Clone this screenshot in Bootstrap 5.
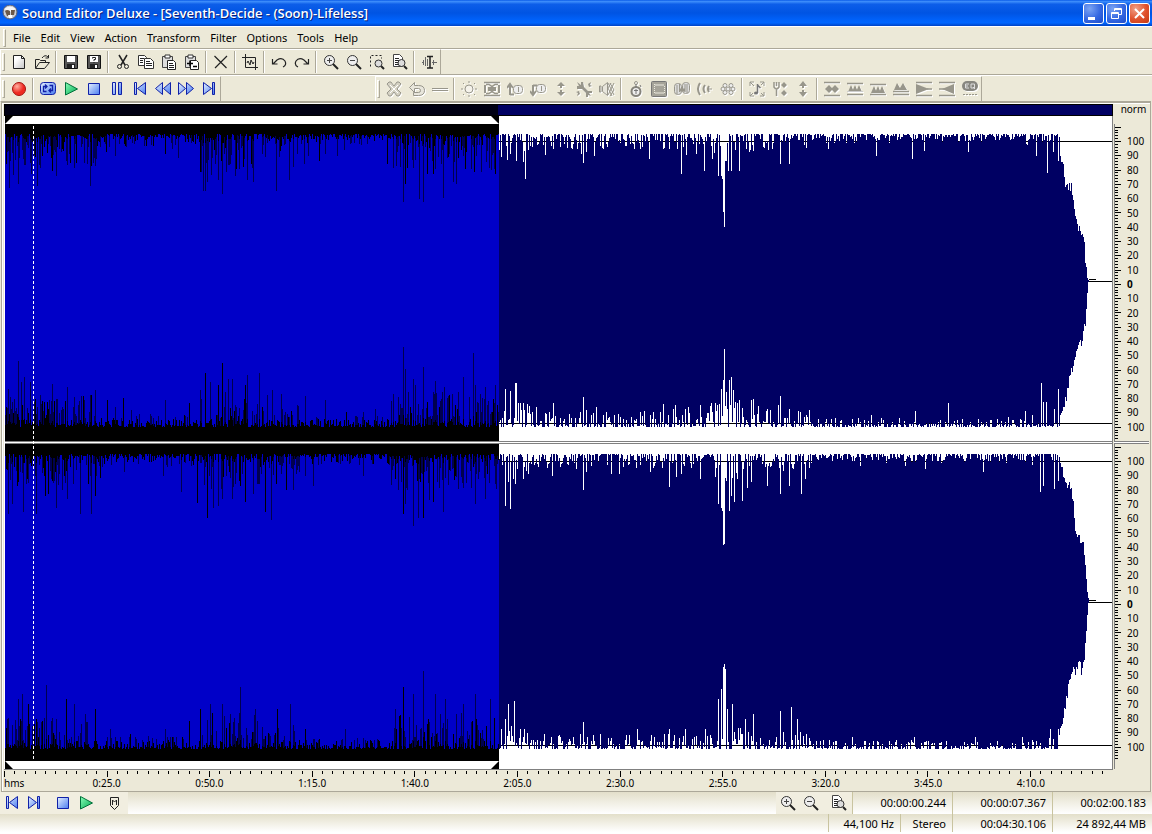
<!DOCTYPE html>
<html lang="en">
<head>
<meta charset="utf-8">
<meta name="viewport" content="width=device-width, initial-scale=1">
<title>Sound Editor Deluxe</title>
<link href="https://cdn.jsdelivr.net/npm/bootstrap@5.3.0/dist/css/bootstrap.min.css" rel="stylesheet">
<style>
:root{--face:#ece9d8;--edge:#aca899}
body{font:11px/14px "Noto Sans","Open Sans",sans-serif;color:#000;background:var(--face)}
button{border:0;background:none;padding:0;color:inherit;font:inherit}
svg{display:block}
.titlebar{height:26px;padding:0 2px;background:linear-gradient(#0a5be8 0,#3d8dfb 6%,#0d5ee9 16%,#0054e3 50%,#0062fb 78%,#0066ff 88%,#0042c4 100%)}
.titlebar h1{font:600 13px/20px "Open Sans","Noto Sans",sans-serif;color:#fff;text-shadow:1px 1px 0 #0a1f7a}
.winbtns{gap:2px}
.winbtn{width:21px;height:21px;border:1px solid #fff;border-radius:3px;background:radial-gradient(circle at 30% 25%,#7ba4f3,#3568e2 55%,#1d4bc9)}
.winbtn.quit{background:radial-gradient(circle at 30% 25%,#f0a088,#e0512c 55%,#c43a14)}
.menubar{height:23px;border-top:1px solid #fff;border-bottom:1px solid var(--edge);padding-left:3px}
.grip{width:3px;height:18px;border:1px solid;border-color:#fff var(--edge) var(--edge) #fff;margin-right:2px}
.menubar button{padding:0 5px}
.strip{height:26px;border-top:1px solid #fff;border-bottom:1px solid var(--edge)}
.band{height:26px;padding-left:1px;border:1px solid;border-color:#fff var(--edge) var(--edge) #fff}
.tool{width:23px;height:22px;display:grid;place-items:center}
.rule{width:2px;height:22px;margin:0 2px;border-left:1px solid var(--edge);border-right:1px solid #fff}
.fx .tool{color:#98968b;filter:drop-shadow(1px 1px 0 #fff)}
.fxgap{width:154px}
.editor{border:1px solid var(--edge);border-top-width:2px;margin:0 1px;padding:1px 1px 0 2px;box-shadow:inset 1px 1px 0 #fff}
.view{min-width:0}
.overview{height:12px;border:1px solid #000;background:linear-gradient(90deg,#000014 44.5%,#000063 44.5%)}
.marks{height:8px;background:#fff}
.marks div{width:44.6%}
.stage{border-right:1px solid #808080;padding-left:1px;background:#fff}
.wave{flex:1 0 317px;min-height:0}
.wave svg,.ticks{width:100%;height:100%}
.split{height:3px;border:1px solid #808080;border-width:1px 0;background:#fff}
.scale{width:35px;margin-left:1px}
.scale .ticks{width:7px}
.inner{border-left:1px solid #808080}
.nums{font-size:10px;line-height:12px;padding:10px 0 7px 5px}
.nums span{flex:1;display:flex;align-items:center}
.scaletop{height:20px;font-size:10px;line-height:10px;padding-left:4px}
.ruler{height:22px;font-size:10px;border-top:1px solid #808080}
.ruler svg{width:100%;height:7px}
.ruler span{flex:2 1 0;text-align:center;line-height:13px}
.cursor{left:29px;top:0;bottom:0;border-left:1px dashed #fff;z-index:2}
.stat{height:22px;line-height:22px;background:linear-gradient(#e3dfca,#fff)}
.stat.low{height:18px;line-height:20px}
.stat .flat{background:#f1eee0}
.cell{border-left:1px solid #c9c4a0;text-align:right;padding-right:6px}
.c1{width:100px}.c2{width:52px}.c3{width:72px}
.foot{height:2px}
#markTools{padding-right:3px}
#markTools .tool:nth-child(-n+2){margin-right:-1px}
#markTools .tool:nth-child(3){margin-left:7px}
#markTools .tool:nth-child(5){margin-left:5px}
#zoomTools{padding-right:2px}
#zoomTools .tool:nth-child(3){margin-left:5px}
</style>
</head>
<body>
<svg width="0" height="0" class="position-absolute" aria-hidden="true">
<defs>
<linearGradient id="gb" x1="0" y1="0" x2="1" y2="1"><stop offset="0" stop-color="#e6f0ff"/><stop offset="1" stop-color="#4a7df0"/></linearGradient>
<linearGradient id="gg" x1="0" y1="0" x2="1" y2="1"><stop offset="0" stop-color="#8affb8"/><stop offset="1" stop-color="#00a850"/></linearGradient>
<radialGradient id="gr" cx=".35" cy=".3"><stop offset="0" stop-color="#ffb0a0"/><stop offset="1" stop-color="#ee2a22"/></radialGradient>
<linearGradient id="gp" x1="0" y1="0" x2="1" y2="1"><stop offset=".3" stop-color="#fff"/><stop offset="1" stop-color="#c4c4c4"/></linearGradient>
</defs></svg>

<div class="d-flex flex-column min-vh-100">
<header class="titlebar d-flex align-items-center">
  <svg width="16" height="16" viewBox="0 0 16 16"><circle cx="8" cy="7" r="7" fill="#c9cdd6" stroke="#5a5f70"/><path d="M2 4q6-5 12 0l-6 3z" fill="#f5f6f8"/><path d="M3 6q2-2 5 0v5H5zM9 5h4l-1 5H9z" fill="#6b5848"/><path d="M6 10h4v3H7z" fill="#fff"/></svg>
  <h1 class="mb-0 ms-1 me-auto">Sound Editor Deluxe - [Seventh-Decide - (Soon)-Lifeless]</h1>
  <div class="winbtns d-flex">
    <button class="winbtn" aria-label="Minimize"><svg width="19" height="19"><path d="M4 13h7v3H4z" fill="#fff"/></svg></button>
    <button class="winbtn" aria-label="Restore"><svg width="19" height="19" fill="none" stroke="#fff"><path d="M7.5 7V4.500h7v6h-3M7 5.500h8M4.500 8.500h7v6h-7zM4 9.500h7"/></svg></button>
    <button class="winbtn quit" aria-label="Close"><svg width="19" height="19" stroke="#fff" stroke-width="2"><path d="M5 5l9 9M14 5l-9 9"/></svg></button>
  </div>
</header>

<nav class="menubar d-flex align-items-center" aria-label="Menu">
  <div class="grip"></div>
  <button>File</button><button>Edit</button><button>View</button><button>Action</button><button>Transform</button><button>Filter</button><button>Options</button><button>Tools</button><button>Help</button>
</nav>
<div class="strip d-flex align-items-center"><div class="band d-flex align-items-center" id="mainTools"></div></div>
<div class="strip d-flex align-items-center border-bottom-0"><div class="band d-flex align-items-center" id="playTools"></div><div class="fxgap"></div><div class="band fx d-flex align-items-center" id="fxTools"></div></div>

<main class="editor d-flex flex-column flex-grow-1">
  <div class="d-flex flex-grow-1">
    <section class="view flex-grow-1 d-flex flex-column">
      <div class="overview"></div>
      <div class="stage d-flex flex-column flex-grow-1 position-relative">
        <div class="marks"><div class="d-flex justify-content-between"><svg width="8" height="8"><path d="M0 0h8L0 8z"/></svg><svg width="8" height="8"><path d="M0 0h8v8z"/></svg></div></div>
        <div class="wave" id="left"></div>
        <div class="split"></div>
        <div class="wave" id="right"></div>
        <div class="marks"><div class="d-flex justify-content-between"><svg width="8" height="8"><path d="M0 0v8h8z"/></svg><svg width="8" height="8"><path d="M8 0v8H0z"/></svg></div></div>
        <div class="cursor position-absolute"></div>
      </div>
    </section>
    <aside class="scale d-flex flex-column">
      <div class="scaletop text-center">norm</div>
      <div class="wave d-flex inner" id="scaleL"></div>
      <div class="split"></div>
      <div class="wave d-flex inner" id="scaleR"></div>
      <div class="marks inner bg-transparent"></div>
    </aside>
  </div>
  <div class="d-flex"><div class="ruler flex-grow-1"><svg id="timeTicks" viewBox="0 0 1109 7" preserveAspectRatio="none" shape-rendering="crispEdges"></svg><div class="d-flex" id="times"></div></div><div class="scale"></div></div>
</main>

<footer>
  <div class="stat d-flex align-items-center">
    <div class="flat d-flex" id="markTools"></div>
    <div class="flex-grow-1"></div>
    <div class="flat d-flex" id="zoomTools"></div>
    <div class="cell c1">00:00:00.244</div><div class="cell c1">00:00:07.367</div><div class="cell c1">00:02:00.183</div>
  </div>
  <div class="stat low d-flex">
    <div class="flex-grow-1"></div>
    <div class="cell c3">44,100 Hz</div><div class="cell c2">Stereo</div><div class="cell c1">00:04:30.106</div><div class="cell c1">24 892,44 MB</div>
  </div>
  <div class="foot bg-white"></div>
</footer>
</div>
<script>
/* Icons, each on a 16 by 16 grid */
const k='fill="none" stroke="#222"', b='fill="url(#gb)" stroke="#1020a8"', g='fill="none" stroke="currentColor"', f='fill="currentColor"';
const lens=`<path d="M10 10l5 5" stroke="#222" stroke-width="2"/><circle cx="6.5" cy="6.5" r="5" fill="#eee" stroke="#333"/>`;
const clip=`<path d="M1.5 2.5h10v11h-10z" fill="#ddd" stroke="#444"/><path d="M4 1h5v3H4z" fill="#fff" stroke="#333"/><path d="M6.5 6.5h6l2 2v7h-8z" fill="#fff" stroke="#222"/>`;
const disk=`<path d="M1.5 1.5h13v13h-13z" fill="#555" stroke="#111"/><path d="M4 2h8v6H4z" fill="#fff"/><path d="M4 10h8v4H4z" fill="#222"/><path d="M9 11h2v3H9z" fill="#fff"/>`;
const page=`<path d="M1.5 .5h6l3 3v9h-9z" fill="#fff" stroke="#444"/><path d="M3 4.5h4M3 6.5h6M3 8.5h6M3 10.5h4" ${k}/>`;
const icons={
'New':`<path d="M2.5 1.5h8l3 3v10h-11z" fill="url(#gp)" stroke="#222"/><path d="M10.5 1.5v3h3" ${k}/>`,
'Open':`<path d="M1.5 14V5.5h4l1 1h5V8M1.5 14.5l4-6h10l-5 6z" ${k}/><path d="M8 4q3-4 6-1M14.5 1v3h-3" ${k}/>`,
'Save':disk,
'Save as':disk+`<path d="M6.5 4.5v-1h3v2h-1.500v1.500M8 8v1" ${k}/>`,
'Cut':`<path d="M4 1l6 10M12 1L6 11" stroke="#222" stroke-width="1.5"/><circle cx="4.5" cy="12.5" r="2" ${k}/><circle cx="11.5" cy="12.5" r="2" ${k}/>`,
'Copy':`<path d="M.5 1.500h6l2 2v8h-8z" fill="#fff" stroke="#333"/><path d="M2 4.5h4M2 6.5h3M2 8.5h3" ${k}/><path d="M6.5 4.5h6l3 3v7h-9z" fill="#fff" stroke="#333"/><path d="M8 7.5h4M8 9.5h6M8 11.5h6" ${k}/>`,
'Paste':clip+`<path d="M8 9.5h4M8 11.5h5M8 13.5h5" ${k}/>`,
'Paste new':clip+`<path d="M3 9.5h6M6 6.5v6M9 12.5h4" stroke="#000" stroke-width="1.5"/>`,
'Delete':`<path d="M1.5 2l12 12M14 2L2 14" ${k} stroke-width="1.2"/>`,
'Trim':`<path d="M3.5 0v13.5H16M0 3.5h13.5V16M5 9l1-2 2 4 1-5 2 4 1-2" ${k}/>`,
'Undo':`<path d="M1.5 5v5h5M2 10l4-4q5-3 8 1 2 4-2 6" ${k} stroke-width="1.2"/>`,
'Redo':`<path d="M14.500 5v5h-5M14 10l-4-4Q5 3 2 7q-2 4 2 6" ${k} stroke-width="1.2"/>`,
'Zoom in':lens+`<path d="M4 6.5h5M6.5 4v5" stroke="#444"/>`,
'Zoom out':lens+`<path d="M4 6.5h5" stroke="#444"/>`,
'Zoom selection':`<path d="M1.5 12.5v-11h11v3" ${k} stroke-dasharray="2 2"/><path d="M12 12l3 3" stroke="#222" stroke-width="2"/><circle cx="9.5" cy="9.5" r="3.5" fill="#ddd" stroke="#333"/>`,
'Zoom all':page+`<path d="M12 12l3 3" stroke="#222" stroke-width="2"/><circle cx="9.5" cy="9" r="3.5" fill="#ddd" stroke="#333"/>`,
'Edit cursor':`<path d="M1 8.5h1.500M2.5 6v5M4.500 3v9M6.500 5v7M11 8.5h5M12.5 6v5" fill="none" stroke="#666"/><path d="M6 2.5h6M9 2v12M6 14h6" stroke="#222" stroke-width="1.5"/>`,
'Record':`<circle cx="8" cy="8" r="6.5" fill="url(#gr)" stroke="#a51410"/>`,
'Loop':`<rect x=".5" y="1.5" width="15" height="12" rx="3" ${b}/><path d="M6.500 5.5H3.500v5h3M9.500 4.500h3v5h-3M5 3.5l2 2-2 2M11 7.500l-2 2 2 2" fill="none" stroke="#1020a8" stroke-width="1.3"/>`,
'Play':`<path d="M2.5 1.5l12 6.500-12 6z" fill="url(#gg)" stroke="#00703a"/>`,
'Stop':`<path d="M2.5 2.5h11v11h-11z" ${b}/>`,
'Pause':`<path d="M3.5 1.5h3v12h-3zM9.5 1.5h3v12h-3z" ${b}/>`,
'Start':`<path d="M2.5 1.5h2v12h-2zM13.5 1.5v12l-8-6z" ${b}/>`,
'Rewind':`<path d="M7.5 1.5v12l-7-6zM15.5 1.5v12l-7-6z" ${b}/>`,
'Forward':`<path d="M.5 1.5v12l7-6zM8.5 1.5v12l7-6z" ${b}/>`,
'End':`<path d="M11.5 1.5h2v12h-2zM2.5 1.5v12l8-6z" ${b}/>`,
'Marker':`<path d="M4.5 2.5h8v8l-4 4-4-4zM6.5 10V5l2 2 2-2v5" ${k}/>`,
'Mute':`<path d="M1 3l2-2h2l3 4 3-4h2l2 2-4 5 4 4-2 3h-2l-3-4-3 4H3l-2-3 4-4z" fill="#d5d2c4" stroke="currentColor"/><path d="M4 4l8 8M12 4l-8 8" stroke="#fff"/>`,
'Reverse':`<path d="M.5 6.5l5-5v3h4q6 0 6 5t-6 5h-5v-3h5q2 0 2-2t-2-2h-4v4z" fill="#e8e6dc" stroke="currentColor"/>`,
'Silence':`<path d="M0 7.5h16M0 9.5h16" ${g}/>`,
'Amplify':`<circle cx="8" cy="8" r="4" fill="#f4f2ea" stroke="currentColor"/><path d="M8 0v2M8 14v2M0 8h2M14 8h2M2 2l1 1M14 2l-1 1M2 14l1-1M14 14l-1-1" ${g}/>`,
'Compress':`<path d="M0 1.5h16M0 14.5h16M2 3.5h3l3 2 3-2h3M2 12.5h3l3-2 3 2h3" ${g} stroke-width="1.500"/><path d="M4 6h8v4H4zM0 4h2v8H0zM14 4h2v8h-2z" ${f}/>`,
'Fade in':`<path d="M3 14V4M0 7l3-4 3 4M3 13.5h4" ${g} stroke-width="2"/><rect x="6.500" y="4.5" width="9" height="8" rx="3" fill="#eee" stroke="currentColor"/><path d="M11.5 6v5" ${g}/>`,
'Fade out':`<path d="M3 4v9M0 10l3 4 3-4M3 4.500h4" ${g} stroke-width="2"/><rect x="6.500" y="3.5" width="9" height="8" rx="3" fill="#eee" stroke="currentColor"/><path d="M11.5 5v5" ${g}/>`,
'Vertical':`<path d="M8 1l4 4H9v2H7V5H4zM8 15l4-4H9V9H7v2H4z" ${f}/>`,
'Stretch':`<path d="M1 1l4 3V1h2l1 5 4 4h4v2h-3l2 3-3-1v2h-2v-4l-4-4H1V5h2zM15 1l-1 3 2 1-3 1-1-3zM1 15l1-3-2-1 3-1 1 3z" ${f}/>`,
'Volume':`<path d="M.500 5v6h1.500V5zM3.5 5.500l5-4v13l-5-4z" fill="#e8e6dc" stroke="currentColor"/><path d="M9 2l6 12M9 7l4 8M11 2l4 7M15 2L9 14M11 15l4-6M9 7l3-5" ${g}/>`,
'Tempo':`<circle cx="8" cy="10.5" r="4.5" fill="#eee" stroke="#85837b" stroke-width="2"/><circle cx="8" cy="2" r="1.5" ${g}/><path d="M8 3v3M8 8v5M6 9.500h4M12 4l1 2" stroke="#777" fill="none"/>`,
'Chamber':`<rect x=".5" y=".5" width="15" height="15" rx="1" fill="#a5a399" stroke="#777"/><path d="M4 4h9M4 12h9" fill="none" stroke="#eceadf"/><path d="M3.500 3v10M13.500 5v7" stroke="#eceadf" stroke-dasharray="1 1"/>`,
'Chorus':`<rect x=".5" y="2.5" width="7" height="11" rx="3" fill="#ddd" stroke="currentColor"/><rect x="8.5" y="1.5" width="7" height="11" rx="3" fill="#ddd" stroke="currentColor"/><path d="M3 4v9M5.500 3v8M11 3v8M13 3v9" ${g}/><path d="M5 9h6" ${g} stroke-width="3"/>`,
'Echo':`<path d="M3 2q-4 6 0 12M8 4q-3 4 0 8M12 5q-2 3 0 6" ${g} stroke-width="2"/><path d="M12 8h3" ${g}/>`,
'Flanger':`<g fill="#eee" stroke="currentColor"><circle cx="5" cy="4.500" r="2"/><circle cx="11" cy="4.500" r="2"/><circle cx="3" cy="8" r="2"/><circle cx="8" cy="8" r="2"/><circle cx="13" cy="8" r="2"/><circle cx="5" cy="11.500" r="2"/><circle cx="11" cy="11.500" r="2"/></g>`,
'Pitch':`<path d="M1 5V1h4M11 1h4v4M1 11v4h4M11 15h4v-4M1 1l4 4M15 1l-3 3M1 15l3-3M15 15l-3-3" ${g}/><path d="M8.500 3v9M8.500 4l3 3" fill="none" stroke="#777" stroke-width="1.5"/><ellipse cx="7" cy="12" rx="2" ry="1.5" fill="#777"/>`,
'Tune':`<path d="M2 1v5q2.500 4 5 0V1M4.500 8v7M4.500 1v4" ${g} stroke-width="1.5"/><path d="M12 1l3 3-3 3-3-3zM12 15l3-3-3-3-3 3z" ${f}/>`,
'Height':`<path d="M8 0l4 5H9v2H7V5H4zM8 16l4-5H9V9H7v2H4z" ${f}/>`,
'Notch':`<path d="M0 1.5h16M0 14.500h16" ${g} stroke-width="1.500"/><path d="M1 8l4-4 3 3 3-3 4 4-4 4-3-3-3 3z" ${f}/>`,
'Band pass':`<path d="M0 2.5h16M0 13.5h16" ${g} stroke-width="1.500"/><path d="M1 11l3-7 3 7zM5 11l3-7 3 7zM9 11l3-7 3 7z" ${f}/><path d="M0 10.500h16" stroke="#ccc"/>`,
'High pass':`<path d="M0 3.5h16M0 13.5h16" ${g} stroke-width="1.500"/><path d="M1 12l3-7 3 7zM5 12l3-7 3 7zM9 12l3-7 3 7z" ${f}/>`,
'Low pass':`<path d="M0 10.5h16M0 13.5h16" ${g} stroke-width="1.5"/><path d="M1 9l3-7 3 5 3-5 4 7z" ${f}/>`,
'High shelf':`<path d="M0 1.5h16M0 14.5h16M11 8h5" ${g} stroke-width="1.5"/><path d="M0 3l13 5-13 5z" ${f}/>`,
'Low shelf':`<path d="M0 1.5h16M0 14.5h16M0 8h5" ${g} stroke-width="1.5"/><path d="M15 3L3 8l12 5z" ${f}/>`,
'Equalizer':`<rect y="0" width="16" height="10" rx="5" fill="#888780"/><path d="M7 3H3.500v4H7M3.500 5H6M9 3h3.500v4H9zM11 6l2 2" fill="none" stroke="#ddd"/><path d="M1 13.5h14" ${g} stroke-dasharray="2 1"/>`
};
const button=n=>`<button class="tool" aria-label="${n}"><svg width="16" height="16" viewBox="0 0 16 16">${icons[n]}</svg></button>`;
function fill(id,list,grip){
  document.getElementById(id).innerHTML=(grip?'<div class="grip"></div>':'')+list.split('|').map(s=>s.split(',').map(button).join('')).join('<div class="rule"></div>');
}
fill('mainTools','New,Open|Save,Save as|Cut,Copy,Paste,Paste new|Delete|Trim|Undo,Redo|Zoom in,Zoom out,Zoom selection,Zoom all|Edit cursor',1);
fill('playTools','Record|Loop,Play,Stop,Pause,Start,Rewind,Forward,End',1);
fill('fxTools','Mute,Reverse,Silence|Amplify,Compress,Fade in,Fade out,Vertical,Stretch,Volume|Tempo,Chamber,Chorus,Echo,Flanger|Pitch,Tune,Height|Notch,Band pass,High pass,Low pass,High shelf,Low shelf,Equalizer',1);
fill('markTools','Start,End,Stop,Play,Marker');
fill('zoomTools','Zoom in,Zoom out,Zoom all');

/* Audio peaks: position:distance below full level, for each edge of each channel */
const parse=s=>s.split(',').map(p=>p.split(':').map(Number));
const edges={
lt:['9:54,13:41,18:50,24:31,31:40,37:52,40:34,44:13,51:24,52:37,56:42,61:18,74:34,84:29,87:30,90:52,95:32,106:18,115:22,125:12,165:20,172:15,178:24,200:38,201:38,203:57,205:57,207:48,211:41,215:30,218:46,222:60,226:38,230:30,235:42,243:33,247:46,253:48,262:20,265:23,276:57,289:46,293:33,304:30,308:22,319:27,325:20,337:22,344:16,359:10,387:30,393:34,400:33,403:68,405:50,413:34,419:65,423:68,427:40,433:40,443:64,449:20,453:48,456:50,463:22,474:38,481:38,486:28,495:40,507:26,510:20,516:27,523:28,525:45,528:16,538:10,545:21,553:15,581:20,583:29,586:18,594:22,606:10,620:9,625:12,649:25,663:15,669:15,677:15,681:40,686:21,696:20,704:37,712:25,718:42,721:42,722:45,723:78,724:93,725:27,726:27,728:37,731:37,735:16,739:37,746:15,753:17,768:16,780:30,789:30,806:14,828:15,876:22,912:25,924:17,968:18,1036:22,1047:39,1053:18,1058:27','1060:20,1063:30,1065:50,1068:53,1071:52,1073:65,1075:80,1078:92,1081:97,1084:105,1085:125,1087:140,1088:146'],
lb:['6:20,8:38,10:30,12:25,18:66,21:45,24:50,30:45,37:20,40:32,44:25,52:43,57:28,62:20,67:40,74:30,84:27,90:32,95:37,107:27,115:20,123:29,131:17,165:27,189:24,200:37,205:54,210:45,218:42,222:64,228:48,232:48,236:20,245:42,247:52,259:54,262:20,267:32,272:37,281:33,285:15,305:31,325:27,346:15,363:15,375:18,393:33,398:30,403:80,405:58,413:48,415:42,423:60,427:25,433:35,435:46,444:40,455:22,463:50,473:74,475:42,480:33,485:40,495:42,497:22,505:38,510:36,515:44,516:44,518:24,523:24,527:23,532:15,536:20,553:24,583:30,586:17,591:12,596:20,603:12,640:15,644:16,663:23,673:18,675:22,685:18,688:20,700:22,708:14,717:22,721:38,723:47,724:78,726:35,729:47,731:50,733:37,735:25,739:27,751:27,753:28,758:21,778:22,780:31,789:18,798:16,806:12,871:12,915:16,948:24,1008:10,1025:16,1041:44,1043:25,1046:25,1054:18,1058:38','1060:10,1063:15,1066:30,1068:44,1070:50,1074:66,1076:72,1079:84,1082:84,1085:105,1087:130,1088:145'],
rt:['8:60,12:50,18:28,23:58,26:30,36:60,45:42,48:40,56:54,62:36,67:45,73:30,80:60,91:60,95:42,100:24,124:18,163:22,181:38,197:49,207:64,213:54,218:52,222:45,232:45,245:48,253:40,265:58,271:66,276:30,286:36,293:36,305:22,313:32,363:22,395:25,403:60,405:50,413:72,418:64,423:64,429:46,433:48,443:58,455:22,463:34,475:50,485:45,495:30,505:52,508:28,510:55,513:25,515:30,523:25,528:20,552:22,583:36,586:18,611:20,619:20,650:18,669:33,676:23,681:20,700:25,718:50,721:54,722:57,723:91,724:90,725:24,729:57,731:42,734:48,742:47,747:34,751:28,767:32,780:40,789:32,801:40,805:25,860:12,905:12,925:15,983:18,1040:38,1043:32,1054:35,1058:27','1060:12,1063:20,1066:28,1070:32,1073:45,1075:80,1077:78,1080:85,1083:88,1085:110,1087:135,1088:147'],
rb:['7:30,18:50,22:55,28:45,36:30,46:64,56:30,66:50,74:45,85:35,95:40,110:20,130:15,165:20,189:28,200:40,210:45,222:45,240:62,255:40,277:40,290:45,305:20,345:20,395:40,403:62,413:55,423:78,435:55,445:50,463:45,475:55,490:50,505:30,508:45,514:48,524:20,560:12,583:27,600:15,637:20,669:20,685:20,705:20,718:50,721:60,723:82,724:85,725:80,727:40,732:45,745:30,753:35,780:38,791:42,797:30,852:12,914:12,975:12,1022:12,1050:20','1058:15,1062:25,1066:50,1068:60,1071:75,1076:80,1080:85,1081:70,1084:90,1086:120,1088:144']};
const noise=[[97,32],[200,13],[260,36],[300,24],[390,11],[499,36],[530,24],[710,15],[745,28],[810,18],[1020,9],[1060,12],[1200,4]];
let seed=91;
const rnd=()=>(seed=(seed*16807)%2147483647)/2147483647;
function depths([peaks,tail]){
  const d=[];
  for(let x=5;x<1090;x++){const r=rnd();d[x]=Math.round(noise.find(n=>x<n[0])[1]*Math.pow(r,x<499?2:3))}
  parse(peaks).forEach(([x,v])=>{d[x]=v});
  const t=parse(tail);
  for(let i=1;i<t.length;i++)for(let x=t[i-1][0];x<=t[i][0];x++)
    d[x]=Math.round(t[i-1][1]+(t[i][1]-t[i-1][1])*(x-t[i-1][0])/(t[i][0]-t[i-1][0])+rnd()*5-(rnd()<.2?5:0));
  return d;
}
function draw(id,top,bot,low){
  const a=depths(top),c=depths(bot),mid=157+(low-303)/2;
  const bar=(x,y1,y2)=>`M${x-5} ${y1}h1V${y2}h-1z`;
  let dim='';
  /* One closed outline per region: along the upper edge, back along the lower one */
  const area=(from,to)=>{
    let up=`M${from-5} ${mid}`,down='';
    for(let x=from;x<to;x++){
      up+=`V${Math.min(10+a[x],mid-1)}h1`;
      down=`V${Math.max(low-c[x],mid+1)}h-1`+down;
    }
    return up+down+'z';
  };
  for(let x=5;x<499;x++){
    if(a[x]>8&&rnd()<.75)dim+=bar(x,10+Math.round(a[x]*.15),10+a[x]);
    if(c[x]>8&&rnd()<.75)dim+=bar(x,low-c[x],low-Math.round(c[x]*.15));
  }
  document.getElementById(id).innerHTML=`<svg viewBox="0 0 1107 317" preserveAspectRatio="none" shape-rendering="crispEdges">
<path d="M0 0h494v317H0z"/><path d="M494 17h613v1H494zM494 ${low-4}h613v1H494zM1083 ${mid}h24v1h-24zM1084 ${mid-2}h7v1h-7z"/>
<path d="${area(5,499)}" fill="#0000c8"/><path d="${dim}" fill="#000050"/><path d="${area(499,1089)}" fill="#000063"/></svg>`;
}
draw('left',edges.lt,edges.lb,303);
draw('right',edges.rt,edges.rb,305);

/* Level scale */
function scale(id){
  let t='';
  for(let i=-5;i<=105;i++){const y=Math.round(17+i*2.857);if(y>0&&y<317)t+=`M0 ${y}h${i%5?3:6}v1H0z`}
  let n='';
  for(let v=100;v>=-100;v-=10)n+=v?`<span>${Math.abs(v)}</span>`:'<span class="fw-bold">0</span>';
  document.getElementById(id).innerHTML=`<svg class="ticks" viewBox="0 0 7 317" preserveAspectRatio="none" shape-rendering="crispEdges"><path d="${t}"/></svg><div class="nums d-flex flex-column">${n}</div>`;
}
scale('scaleL');scale('scaleR');

/* Time ruler */
let tt='';
for(let i=0;i<108;i++)tt+=`M${Math.round(i*10.26)} 1h1v${i%10?3:6}h-1z`;
document.getElementById('timeTicks').innerHTML=`<path d="${tt}"/>`;
document.getElementById('times').innerHTML='<span class="text-start" style="flex-grow:1">hms</span>'+['0:25.0','0:50.0','1:15.0','1:40.0','2:05.0','2:30.0','2:55.0','3:20.0','3:45.0','4:10.0'].map(s=>`<span>${s}</span>`).join('')+'<span style="flex-grow:.6"></span>';
</script>
<script src="https://cdn.jsdelivr.net/npm/bootstrap@5.3.0/dist/js/bootstrap.bundle.min.js"></script>
</body>
</html>
